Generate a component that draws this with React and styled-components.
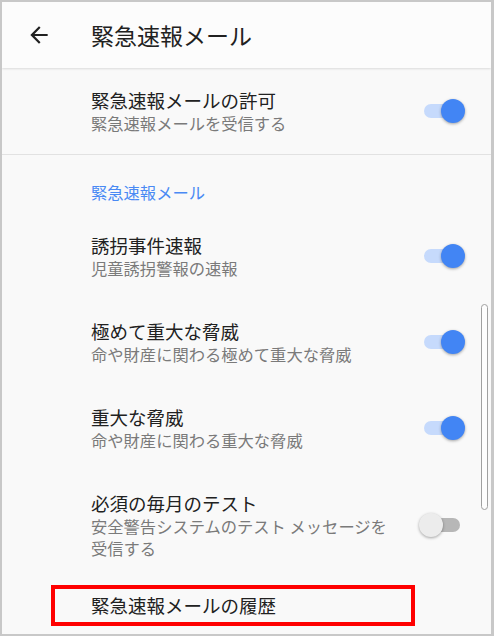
import React from 'react';
import styled, { createGlobalStyle } from 'styled-components';

const GlobalStyle = createGlobalStyle`
    html, body {
        margin: 0;
        padding: 0;
        background: #ffffff;
    }
    * {
        box-sizing: border-box;
    }
`

const items = [
    { title: '誘拐事件速報', sub: '児童誘拐警報の速報', on: true },
    { title: '極めて重大な脅威', sub: '命や財産に関わる極めて重大な脅威', on: true },
    { title: '重大な脅威', sub: '命や財産に関わる重大な脅威', on: true },
    { title: '必須の毎月のテスト', sub: '安全警告システムのテスト メッセージを受信する', on: false },
];

function BackArrow() {
    return (
        <svg width="26" height="26" viewBox="0 0 24 24">
            <path fill="#212121" d="M20 11H7.83l5.59-5.59L12 4l-8 8 8 8 1.41-1.41L7.83 13H20v-2z"/>
        </svg>
    );
}

function App() {
    return (
        <Frame>
            <GlobalStyle/>
            <AppBar>
                <BackButton><BackArrow/></BackButton>
                <BarTitle>緊急速報メール</BarTitle>
            </AppBar>
            <Content>
                <Item divider>
                    <TextBlock>
                        <Title>緊急速報メールの許可</Title>
                        <Sub>緊急速報メールを受信する</Sub>
                    </TextBlock>
                    <Switch on={1}><Track on={1}/><Thumb on={1}/></Switch>
                </Item>
                <SectionHeader>緊急速報メール</SectionHeader>
                {items.map(it => (
                    <Item key={it.title}>
                        <TextBlock>
                            <Title>{it.title}</Title>
                            <Sub>{it.sub}</Sub>
                        </TextBlock>
                        <Switch on={it.on ? 1 : 0}>
                            <Track on={it.on ? 1 : 0}/>
                            <Thumb on={it.on ? 1 : 0}/>
                        </Switch>
                    </Item>
                ))}
                <HistoryRow>
                    <Highlight>
                        <Title>緊急速報メールの履歴</Title>
                    </Highlight>
                </HistoryRow>
                <ScrollThumb/>
            </Content>
        </Frame>
    );
}

const Frame = styled.div`
    width: 494px;
    height: 636px;
    border: 2px solid #c8c8c8;
    border-right-width: 3px;
    background: #f9f9f9;
    overflow: hidden;
    display: flex;
    flex-direction: column;
    font-family: "Noto Sans CJK JP", "Noto Sans", sans-serif;
`

const AppBar = styled.div`
    height: 66px;
    flex-shrink: 0;
    display: flex;
    align-items: center;
    background: #fcfcfc;
    box-shadow: 0 1px 2px rgba(0, 0, 0, 0.12);
    position: relative;
    z-index: 1;
`

const BackButton = styled.div`
    width: 26px;
    height: 26px;
    margin-left: 24px;
    display: flex;
`

const BarTitle = styled.div`
    margin-left: 39px;
    font-size: 23px;
    line-height: 30px;
    color: #212121;
`

const Content = styled.div`
    flex: 1;
    position: relative;
`

const Item = styled.div`
    display: flex;
    align-items: center;
    padding: 20px 26px 20px 89px;
    border-bottom: ${props => props.divider ? '1px solid #e2e2e2' : 'none'};
`

const TextBlock = styled.div`
    flex: 1;
    display: flex;
    flex-direction: column;
`

const Title = styled.div`
    font-size: 18.5px;
    line-height: 24px;
    color: #212121;
`

const Sub = styled.div`
    font-size: 16.3px;
    line-height: 22px;
    color: #7a7a7a;
`

const SectionHeader = styled.div`
    padding: 26px 0 10px 89px;
    font-size: 16.3px;
    line-height: 22px;
    color: #4a8af4;
`

const Switch = styled.div`
    position: relative;
    width: 46px;
    height: 24px;
    margin-left: 30px;
    flex-shrink: 0;
`

const Track = styled.div`
    position: absolute;
    left: 5px;
    right: 5px;
    top: 5px;
    height: 14px;
    border-radius: 7px;
    background: ${props => props.on ? '#c6dafc' : '#b7b7b7'};
`

const Thumb = styled.div`
    position: absolute;
    top: 0;
    ${props => props.on ? 'right: 0;' : 'left: 0;'}
    width: 24px;
    height: 24px;
    border-radius: 50%;
    background: ${props => props.on ? '#4285f4' : '#ececec'};
    box-shadow: 0 1px 3px rgba(0, 0, 0, 0.35);
`

const HistoryRow = styled.div`
    padding: 6px 0 0 49px;
`

const Highlight = styled.div`
    width: 364px;
    height: 41px;
    border: 4px solid #ff0000;
    padding: 4px 0 0 36px;
`

const ScrollThumb = styled.div`
    position: absolute;
    right: 3px;
    top: 236px;
    width: 7px;
    height: 206px;
    border: 1.5px solid #a0a0a0;
    border-radius: 4px;
    background: #fdfdfd;
`

export default App;
